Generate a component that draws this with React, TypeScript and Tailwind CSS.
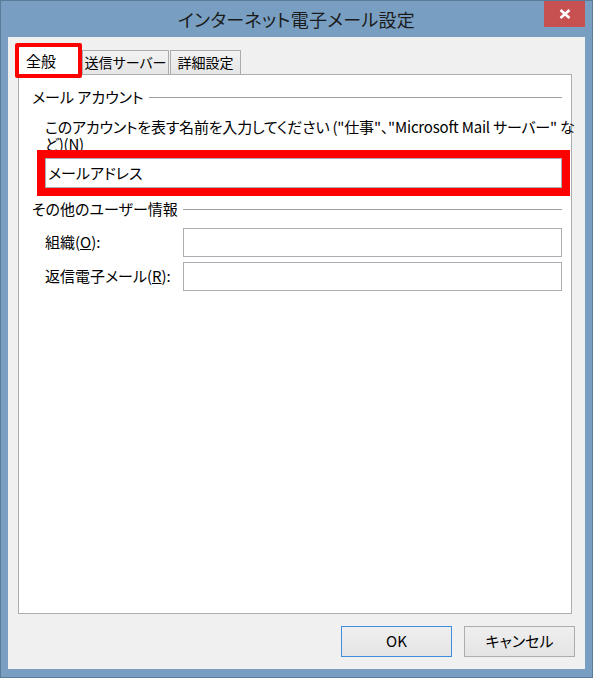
const font = "[font-family:'Noto_Sans_CJK_JP','Noto_Sans',sans-serif] [font-feature-settings:'palt']";

const Tab = ({ label, className }: { label: string; className: string }) => (
  <div
    className={`h-[24px] flex items-center justify-center whitespace-nowrap border border-b-0 border-[#acacac] bg-gradient-to-b from-[#f2f2f2] to-[#e6e6e6] text-[14px] text-black ${className}`}
  >
    {label}
  </div>
);

const Button = ({ label, primary }: { label: string; primary?: boolean }) => (
  <button
    className={`w-[111px] h-[31px] flex items-center justify-center border bg-gradient-to-b from-[#efefef] to-[#e4e4e4] text-[15px] text-black ${
      primary ? "border-[#3d8ee0]" : "border-[#adadad]"
    }`}
  >
    {label}
  </button>
);

const GroupTitle = ({ label }: { label: string }) => (
  <div className="flex items-center h-[18px] ml-[13px]">
    <span className="text-[15px] leading-[18px] text-black whitespace-nowrap">{label}</span>
    <div className="flex-1 h-px bg-[#a0a0a0] ml-[5px]" />
  </div>
);

const App = () => {
  return (
    <div className={`w-[593px] h-[678px] bg-[#789fc1] border border-[#5b7c99] flex flex-col ${font}`}>
      {/* title bar */}
      <div className="relative h-[36px] flex items-center justify-center">
        <span className="text-[18px] text-[#1b1b1b] tracking-[0.3px]">インターネット電子メール設定</span>
        <div className="absolute right-[7px] top-0 w-[41px] h-[26px] bg-[#c75050] flex items-center justify-center">
          <svg width="12" height="10" viewBox="0 0 12 10">
            <path d="M1.5 1 L10.5 9 M10.5 1 L1.5 9" stroke="#fff" strokeWidth="2.6" />
          </svg>
        </div>
      </div>

      {/* client */}
      <div className="flex-1 mx-[7px] mb-[8px] bg-[#f0f0f0] flex flex-col px-[10px] pt-[13px] pb-[12px]">
        <div className="flex h-[24px] relative z-10">
          <div className="relative w-[64px] h-[28px] -mt-[3px] bg-white flex items-center pl-[8px] text-[15px] text-black">
            全般
            <div className="absolute left-[-3px] right-0 top-[-4px] bottom-[-3px] border-[4px] border-[#ff0000] rounded-[2px]" />
          </div>
          <Tab label="送信サーバー" className="w-[87px]" />
          <Tab label="詳細設定" className="w-[71px] ml-px" />
        </div>

        <div className="flex-1 mr-[3px] bg-white border border-[#adadad] pr-[9px] pt-[13px]">
          <GroupTitle label="メール アカウント" />
          <p className="mt-[12px] ml-[26px] text-[15px] leading-[17px] tracking-[-0.2px] text-black whitespace-nowrap">
            このアカウントを表す名前を入力してください ("仕事"、"Microsoft Mail サーバー" な
            <br />
            ど)(<span className="underline">N</span>)
          </p>
          <div className="relative mt-[6px] ml-[26px] h-[30px] border border-[#abadb3] bg-white flex items-center pl-[2px] text-[15px] text-black">
            メールアドレス
            <div className="absolute -inset-[9px] border-[8px] border-[#ff0000]" />
          </div>

          <div className="mt-[12px]">
            <GroupTitle label="その他のユーザー情報" />
          </div>
          <div className="mt-[10px] ml-[26px] flex flex-col gap-[5px]">
            <div className="flex items-center">
              <span className="w-[138px] text-[15px] text-black">
                組織(<span className="underline">O</span>):
              </span>
              <div className="flex-1 h-[29px] border border-[#abadb3] bg-white" />
            </div>
            <div className="flex items-center">
              <span className="w-[138px] text-[15px] text-black">
                返信電子メール(<span className="underline">R</span>):
              </span>
              <div className="flex-1 h-[29px] border border-[#abadb3] bg-white" />
            </div>
          </div>
        </div>

        <div className="flex justify-end gap-[12px] mt-[12px]">
          <Button label="OK" primary />
          <Button label="キャンセル" />
        </div>
      </div>
    </div>
  );
};

export default App;
